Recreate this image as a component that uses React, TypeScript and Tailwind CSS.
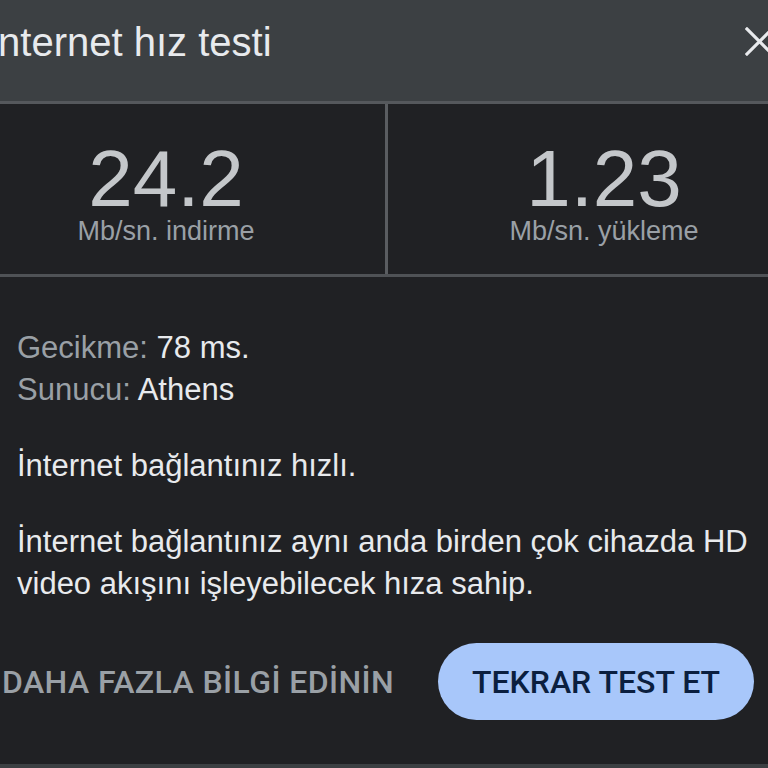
import React from "react";

export default function App() {
  return (
    <div className="w-[768px] h-[768px] overflow-hidden bg-[#202124] font-['Liberation_Sans',Arial,sans-serif]">
      <div className="w-[873px] ml-[-53px] h-full flex flex-col">
        {/* header */}
        <div className="relative h-[104px] shrink-0 bg-[#3c4043] border-b-[3px] border-[#55585c] pl-[40px] pt-[22px]">
          <h1 className="text-[40px] leading-[40px] text-[#e8eaed]">İnternet hız testi</h1>
          <button className="absolute left-[798px] top-[27px] w-[29px] h-[29px]">
            <svg viewBox="0 0 30 30" className="w-[29px] h-[29px]">
              <path d="M2 2 L28 28 M28 2 L2 28" stroke="#e8eaed" strokeWidth="3.2" strokeLinecap="square" />
            </svg>
          </button>
        </div>

        {/* stats */}
        <div className="flex h-[173px] shrink-0 border-b-[3px] border-[#4f5256]">
          <div className="w-[438px] flex flex-col items-center pt-[40px]">
            <div className="text-[80px] leading-[70px] text-[#c4c7ca]">24.2</div>
            <div className="text-[27px] leading-[30px] mt-[2px] text-[#9aa0a6]">Mb/sn. indirme</div>
          </div>
          <div className="w-[3px] bg-[#5a5d61]" />
          <div className="flex-1 flex flex-col items-center pt-[40px]">
            <div className="text-[80px] leading-[70px] text-[#c4c7ca]">1.23</div>
            <div className="text-[27px] leading-[30px] mt-[2px] text-[#9aa0a6]">Mb/sn. yükleme</div>
          </div>
        </div>

        {/* body */}
        <div className="flex-1 flex flex-col pl-[70px] pr-[66px] pt-[50px] text-[31px] leading-[42px] text-[#e8eaed]">
          <p>
            <span className="text-[#9aa0a6]">Gecikme:</span> 78 ms.
          </p>
          <p>
            <span className="text-[#9aa0a6]">Sunucu:</span> Athens
          </p>
          <p className="mt-[34px]">İnternet bağlantınız hızlı.</p>
          <p className="mt-[34px] w-[750px]">
            İnternet bağlantınız aynı anda birden çok cihazda HD video akışını işleyebilecek hıza sahip.
          </p>

          <div className="flex items-center justify-between mt-[38px] -ml-[15px]">
            <button className="font-['Roboto',sans-serif] font-medium text-[32px] text-[#9aa0a6] tracking-[0.4px]">
              DAHA FAZLA BİLGİ EDİNİN
            </button>
            <button className="w-[316px] h-[77px] rounded-full bg-[#a8c7fa] font-['Roboto',sans-serif] font-medium text-[32px] text-[#0b1f3f]">
              TEKRAR TEST ET
            </button>
          </div>
        </div>
        <div className="h-[4px] shrink-0 bg-[#3c4043]" />
      </div>
    </div>
  );
}
